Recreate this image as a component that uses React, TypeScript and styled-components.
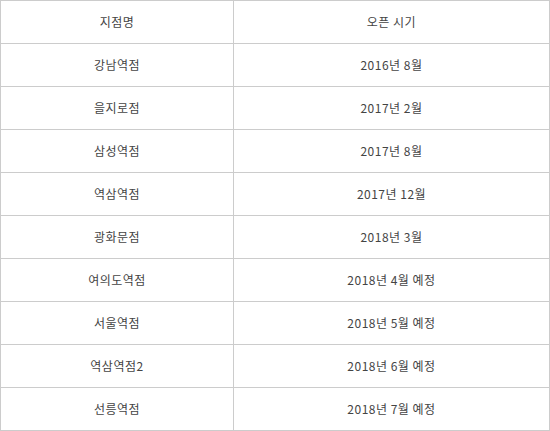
import React from "react";
import styled, { createGlobalStyle } from "styled-components";

const Global = createGlobalStyle`
  html, body { margin: 0; padding: 0; background: #fff; }
  body { font-family: "Noto Sans CJK KR", "Noto Sans", sans-serif; }
`;

const Table = styled.table`
  width: 550px;
  border-collapse: collapse;
  table-layout: fixed;
  font-size: 12px;
  letter-spacing: 0.5px;
  color: #444;
`;

const Cell = styled.td`
  border: 1px solid #cccccc;
  height: 42px;
  padding: 0;
  text-align: center;
  vertical-align: middle;
  line-height: 16px;
`;

const HeadCell = styled(Cell).attrs({ as: "th" })`
  font-weight: normal;
`;

const rows: [string, string][] = [
  ["강남역점", "2016년 8월"],
  ["을지로점", "2017년 2월"],
  ["삼성역점", "2017년 8월"],
  ["역삼역점", "2017년 12월"],
  ["광화문점", "2018년 3월"],
  ["여의도역점", "2018년 4월 예정"],
  ["서울역점", "2018년 5월 예정"],
  ["역삼역점2", "2018년 6월 예정"],
  ["선릉역점", "2018년 7월 예정"],
];

export default function App() {
  return (
    <>
      <Global />
      <Table>
        <colgroup>
          <col style={{ width: 233 }} />
          <col />
        </colgroup>
        <thead>
          <tr>
            <HeadCell>지점명</HeadCell>
            <HeadCell>오픈 시기</HeadCell>
          </tr>
        </thead>
        <tbody>
          {rows.map(([name, date]) => (
            <tr key={name}>
              <Cell>{name}</Cell>
              <Cell>{date}</Cell>
            </tr>
          ))}
        </tbody>
      </Table>
    </>
  );
}
